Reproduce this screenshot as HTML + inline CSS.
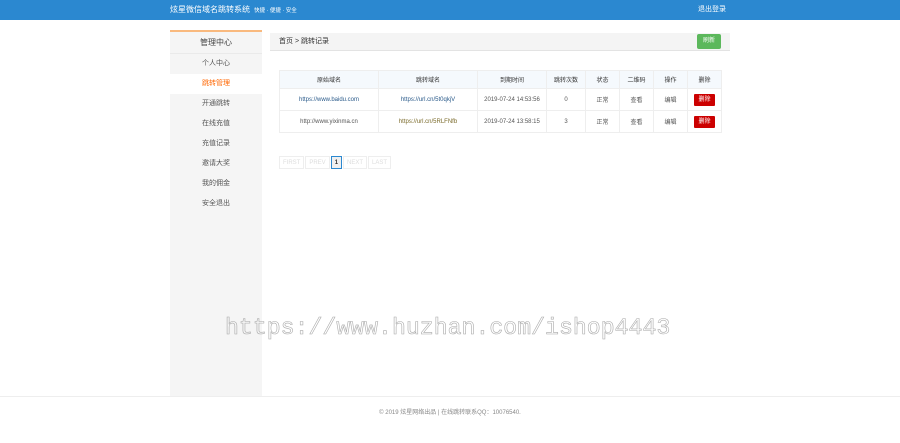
<!DOCTYPE html>
<html><head><meta charset="utf-8"><style>
*{margin:0;padding:0;box-sizing:border-box}
body{width:900px;height:443px;background:#fff;font-family:"Liberation Sans","Noto Sans CJK SC",sans-serif;position:relative;overflow:hidden;color:#333}
.hd{position:absolute;left:0;top:0;width:900px;height:20px;background:#2b88d0;color:#fff}
.hd .t{position:absolute;left:170px;top:4px;font-size:8px;line-height:11px}
.hd .t small{font-size:5.5px;margin-left:4px}
.hd .r{position:absolute;left:698px;top:5px;font-size:7px;line-height:9px}
.sb{position:absolute;left:170px;top:30px;width:92px;height:366px;background:#f5f5f5;border-top:2px solid #f9b97e}
.sb div{height:20px;line-height:20px;text-align:center;font-size:7px;color:#555}
.sb .h{height:22px;line-height:22px;font-size:8px;color:#444;border-bottom:1px solid #eaeaea}
.sb .a{background:#fff;color:#f60}
.bc{position:absolute;left:270px;top:33px;width:460px;height:18px;background:#f4f4f4;border-bottom:1px solid #e3e3e3;font-size:7px;line-height:18px;padding-left:9px}
.btn{position:absolute;left:697px;top:34px;width:24px;height:15px;background:#5cb85c;border-radius:2px;color:#fff;font-size:6px;text-align:center;line-height:15px}
table{position:absolute;left:279px;top:70px;border-collapse:collapse;font-size:6px;color:#555}
td,th{border:1px solid #eee;text-align:center;font-weight:normal}
th{height:18px;background:#f5f9fd;color:#333}
td{height:22px}
td a{color:#2a5a8a}
.del{display:inline-block;width:21px;height:12px;background:#c00;color:#fff;line-height:12px;border-radius:1px}
.pg{position:absolute;left:279px;top:156px;font-size:6px;color:#ddd}
.pg span{display:inline-block;height:13px;line-height:12px;border:1px solid #eee;padding:0 3px;margin-right:1px;vertical-align:top}
.pg .c{color:#333;border-color:#2b88d0;font-weight:bold;background:#f0f0f0}
.wm{position:absolute;left:225px;top:315px;font-family:"Liberation Mono",monospace;font-size:23.2px;color:transparent;-webkit-text-stroke:0.6px #aaa;white-space:nowrap}
.ft{position:absolute;left:0;top:396px;width:900px;border-top:1px solid #eee;text-align:center;font-size:6px;color:#888;padding-top:10px}
</style></head><body>
<div class="hd"><div class="t">炫星微信域名跳转系统<small>快捷 · 便捷 · 安全</small></div><div class="r">退出登录</div></div>
<div class="sb"><div class="h">管理中心</div><div>个人中心</div><div class="a">跳转管理</div><div>开通跳转</div><div>在线充值</div><div>充值记录</div><div>邀请大奖</div><div>我的佣金</div><div>安全退出</div></div>
<div class="bc">首页 &gt; 跳转记录</div><div class="btn">刷新</div>
<table>
<tr><th style="width:99px">原始域名</th><th style="width:99px">跳转域名</th><th style="width:69px">到期时间</th><th style="width:39px">跳转次数</th><th style="width:34px">状态</th><th style="width:34px">二维码</th><th style="width:34px">操作</th><th style="width:34px">删除</th></tr>
<tr><td><a>https://www.baidu.com</a></td><td><a>https://url.cn/5t0qkjV</a></td><td>2019-07-24 14:53:56</td><td>0</td><td>正常</td><td>查看</td><td>编辑</td><td><span class="del">删除</span></td></tr>
<tr><td>http://www.yixinma.cn</td><td><a style="color:#7a6a2a">https://url.cn/5RLFNfb</a></td><td>2019-07-24 13:58:15</td><td>3</td><td>正常</td><td>查看</td><td>编辑</td><td><span class="del">删除</span></td></tr>
</table>
<div class="pg"><span>FIRST</span><span>PREV</span><span class="c">1</span><span>NEXT</span><span>LAST</span></div>
<div class="wm">https://www.huzhan.com/ishop4443</div>
<div class="ft">© 2019 炫星网络出品 | 在线跳转联系QQ：10076540.</div>
</body></html>
